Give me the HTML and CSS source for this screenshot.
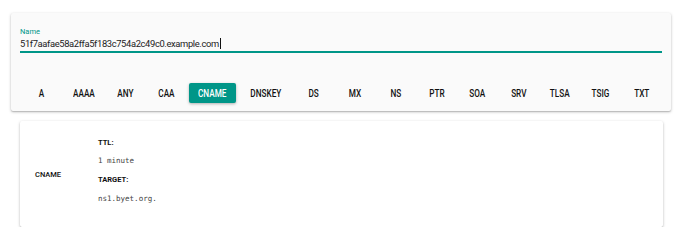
FILE: index.html
```html
<!DOCTYPE html>
<html>
<head>
<meta charset="utf-8">
<link rel="stylesheet" href="styles.css">
</head>
<body>
<div class="card top">
  <div class="field">
    <label class="label">Name</label>
    <div class="input"><span class="value">51f7aafae58a2ffa5f183c754a2c49c0.example.com</span><span class="caret"></span></div>
  </div>
  <div class="types">
    <button class="btn"><span>A</span></button>
    <button class="btn"><span>AAAA</span></button>
    <button class="btn"><span>ANY</span></button>
    <button class="btn"><span>CAA</span></button>
    <button class="btn active"><span>CNAME</span></button>
    <button class="btn"><span>DNSKEY</span></button>
    <button class="btn"><span>DS</span></button>
    <button class="btn"><span>MX</span></button>
    <button class="btn"><span>NS</span></button>
    <button class="btn"><span>PTR</span></button>
    <button class="btn"><span>SOA</span></button>
    <button class="btn"><span>SRV</span></button>
    <button class="btn"><span>TLSA</span></button>
    <button class="btn"><span>TSIG</span></button>
    <button class="btn"><span>TXT</span></button>
  </div>
</div>
<div class="card result">
  <div class="rtype">CNAME</div>
  <div class="details">
    <div class="key">TTL:</div>
    <div class="val">1 minute</div>
    <div class="key">TARGET:</div>
    <div class="val">ns1.byet.org.</div>
  </div>
</div>
</body>
</html>
```
FILE: styles.css
```css
html, body {
  margin: 0;
  padding: 0;
  background: #ffffff;
  font-family: Roboto, "Liberation Sans", sans-serif;
}
body {
  padding: 13px 19px 0 11px;
}
.card {
  box-shadow: 0 1px 3px rgba(0,0,0,0.25), 0 1px 1px rgba(0,0,0,0.12);
  border-radius: 2px;
}
.top {
  background: #fafafa;
  padding: 14px 9px 9px 9px;
  height: 98px;
  box-sizing: border-box;
}
.field {
  display: flex;
  flex-direction: column;
}
.label {
  font-size: 7.5px;
  line-height: 9px;
  color: #009688;
}
.input {
  display: flex;
  align-items: center;
  height: 14px;
  border-bottom: 2px solid #009688;
  font-size: 9.4px;
  letter-spacing: -0.37px;
  color: #222;
  padding-bottom: 1px;
}
.caret {
  width: 1px;
  height: 11px;
  background: #111;
  margin-left: 1px;
}
.types {
  display: flex;
  justify-content: center;
  gap: 5px;
  margin-top: 30px;
  padding-left: 1px;
}
.btn {
  min-width: 36px;
  height: 20px;
  padding: 0 5px;
  border: none;
  background: transparent;
  font-family: Roboto, "Liberation Sans", sans-serif;
  font-weight: 500;
  font-size: 10.5px;
  color: #111;
  border-radius: 2px;
}
.btn span {
  display: inline-block;
  transform: scaleX(0.78);
}
.btn.active {
  background: #009688;
  color: #fff;
  box-shadow: 0 1px 3px rgba(0,0,0,0.3);
}
.result {
  margin: 10px 8px 0 9px;
  background: #fff;
  height: 106px;
  display: flex;
  align-items: center;
}
.rtype {
  width: 78px;
  padding-left: 15px;
  box-sizing: border-box;
  font-size: 7.5px;
  font-weight: 500;
  color: #111;
}
.details {
  display: flex;
  flex-direction: column;
  padding-bottom: 6px;
}
.key {
  font-size: 7.5px;
  font-weight: 700;
  color: #111;
  line-height: 18.7px;
}
.val {
  font-family: "DejaVu Sans Mono", "Liberation Mono", monospace;
  font-size: 7.5px;
  color: #444;
  line-height: 18.7px;
}
```
